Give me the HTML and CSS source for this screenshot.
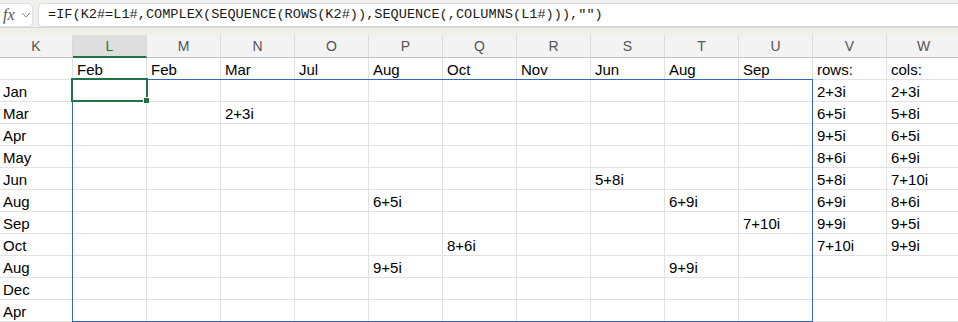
FILE: index.html
```html
<!DOCTYPE html>
<html>

<head>
    <meta charset="UTF-8">
    <title>Sheet</title>
    <link rel="stylesheet" href="styles.css">
</head>

<body>
    <div id="formula-bar">
        <div class="fx-box">
            <span class="fx">fx</span>
            <svg class="chevron" width="10" height="6" viewBox="0 0 10 6">
                <path d="M1 1 L5 5 L9 1" fill="none" stroke="#8a8a8a" stroke-width="1"/>
            </svg>
        </div>
        <div class="formula">=IF(K2#=L1#,COMPLEX(SEQUENCE(ROWS(K2#)),SEQUENCE(,COLUMNS(L1#))),"")</div>
    </div>
    <div id="strip"></div>
    <div id="sheet">
        <div id="grid"></div>
        <div class="range"></div>
        <div class="active"><span class="handle"></span></div>
    </div>
    <script>
        // Dữ liệu của bảng
        const letters = ['K', 'L', 'M', 'N', 'O', 'P', 'Q', 'R', 'S', 'T', 'U', 'V', 'W'];
        const rows = [
            ['', 'Feb', 'Feb', 'Mar', 'Jul', 'Aug', 'Oct', 'Nov', 'Jun', 'Aug', 'Sep', 'rows:', 'cols:'],
            ['Jan', '', '', '', '', '', '', '', '', '', '', '2+3i', '2+3i'],
            ['Mar', '', '', '2+3i', '', '', '', '', '', '', '', '6+5i', '5+8i'],
            ['Apr', '', '', '', '', '', '', '', '', '', '', '9+5i', '6+5i'],
            ['May', '', '', '', '', '', '', '', '', '', '', '8+6i', '6+9i'],
            ['Jun', '', '', '', '', '', '', '', '5+8i', '', '', '5+8i', '7+10i'],
            ['Aug', '', '', '', '', '6+5i', '', '', '', '6+9i', '', '6+9i', '8+6i'],
            ['Sep', '', '', '', '', '', '', '', '', '', '7+10i', '9+9i', '9+5i'],
            ['Oct', '', '', '', '', '', '8+6i', '', '', '', '', '7+10i', '9+9i'],
            ['Aug', '', '', '', '', '9+5i', '', '', '', '9+9i', '', '', ''],
            ['Dec', '', '', '', '', '', '', '', '', '', '', '', ''],
            ['Apr', '', '', '', '', '', '', '', '', '', '', '', '']
        ];

        const grid = document.getElementById('grid');

        // Tiêu đề cột
        letters.forEach(function (l) {
            const h = document.createElement('div');
            h.className = 'col-head' + (l === 'L' ? ' selected' : '');
            h.textContent = l;
            grid.appendChild(h);
        });

        // Các ô
        rows.forEach(function (row) {
            row.forEach(function (v, i) {
                const c = document.createElement('div');
                c.className = i === 0 ? 'cell first' : 'cell';
                c.textContent = v;
                grid.appendChild(c);
            });
        });
    </script>
</body>

</html>
```

FILE: styles.css
```css
/* Excel-like sheet */
body {
    margin: 0;
    width: 958px;
    height: 322px;
    overflow: hidden;
    background-color: #fff;
    font-family: "Liberation Sans", Arial, sans-serif;
}

#formula-bar {
    display: flex;
    height: 27px;
    padding-top: 3px;
    box-sizing: border-box;
    background-color: #f0f1ee;
    gap: 5px;
}

.fx-box {
    width: 33px;
    height: 24px;
    box-sizing: border-box;
    background-color: #fff;
    border: 1px solid #e0e0e0;
    border-left: none;
    border-radius: 0 5px 5px 0;
    display: flex;
    align-items: center;
    padding-left: 3px;
}

.fx {
    font-family: "Liberation Serif", serif;
    font-style: italic;
    font-size: 16px;
    color: #555;
    width: 16px;
}

.chevron {
    margin-left: 2px;
}

.formula {
    flex: 1;
    height: 24px;
    box-sizing: border-box;
    background-color: #fff;
    border: 1px solid #dcdcdc;
    border-right: none;
    border-radius: 5px 0 0 5px;
    padding-left: 9px;
    font-family: "Liberation Mono", monospace;
    font-size: 13.6px;
    line-height: 22px;
    color: #1a1a1a;
}

#strip {
    height: 8px;
    background-color: #eef1e9;
    border-top: 1px solid #d6d6d6;
    box-sizing: border-box;
}

#sheet {
    position: relative;
}

#grid {
    display: grid;
    grid-template-columns: 73px repeat(12, 74px);
    grid-template-rows: 23px;
    grid-auto-rows: 22px;
}

.col-head {
    background-color: #f3f3f3;
    border-right: 1px solid #dadada;
    border-bottom: 1px solid #c4c4c4;
    text-align: center;
    font-size: 14px;
    line-height: 22px;
    color: #555;
}

.col-head.selected {
    background-color: #dedede;
    color: #217346;
    border-bottom: 2px solid #217346;
}

.cell {
    border-right: 1px solid #e1e1e1;
    border-bottom: 1px solid #e1e1e1;
    padding: 2px 0 0 4px;
    font-size: 15px;
    line-height: 20px;
    color: #000;
    white-space: nowrap;
    overflow: hidden;
}

.cell.first {
    padding-left: 3px;
}

.range {
    position: absolute;
    left: 72px;
    top: 44px;
    width: 741px;
    height: 243px;
    box-sizing: border-box;
    border: 1px solid #3766c0;
}

.active {
    position: absolute;
    left: 71px;
    top: 43px;
    width: 77px;
    height: 24px;
    box-sizing: border-box;
    border: 2px solid #217346;
}

.handle {
    position: absolute;
    right: -4px;
    bottom: -4px;
    width: 5px;
    height: 5px;
    background-color: #217346;
    border: 1px solid #fff;
}
```
